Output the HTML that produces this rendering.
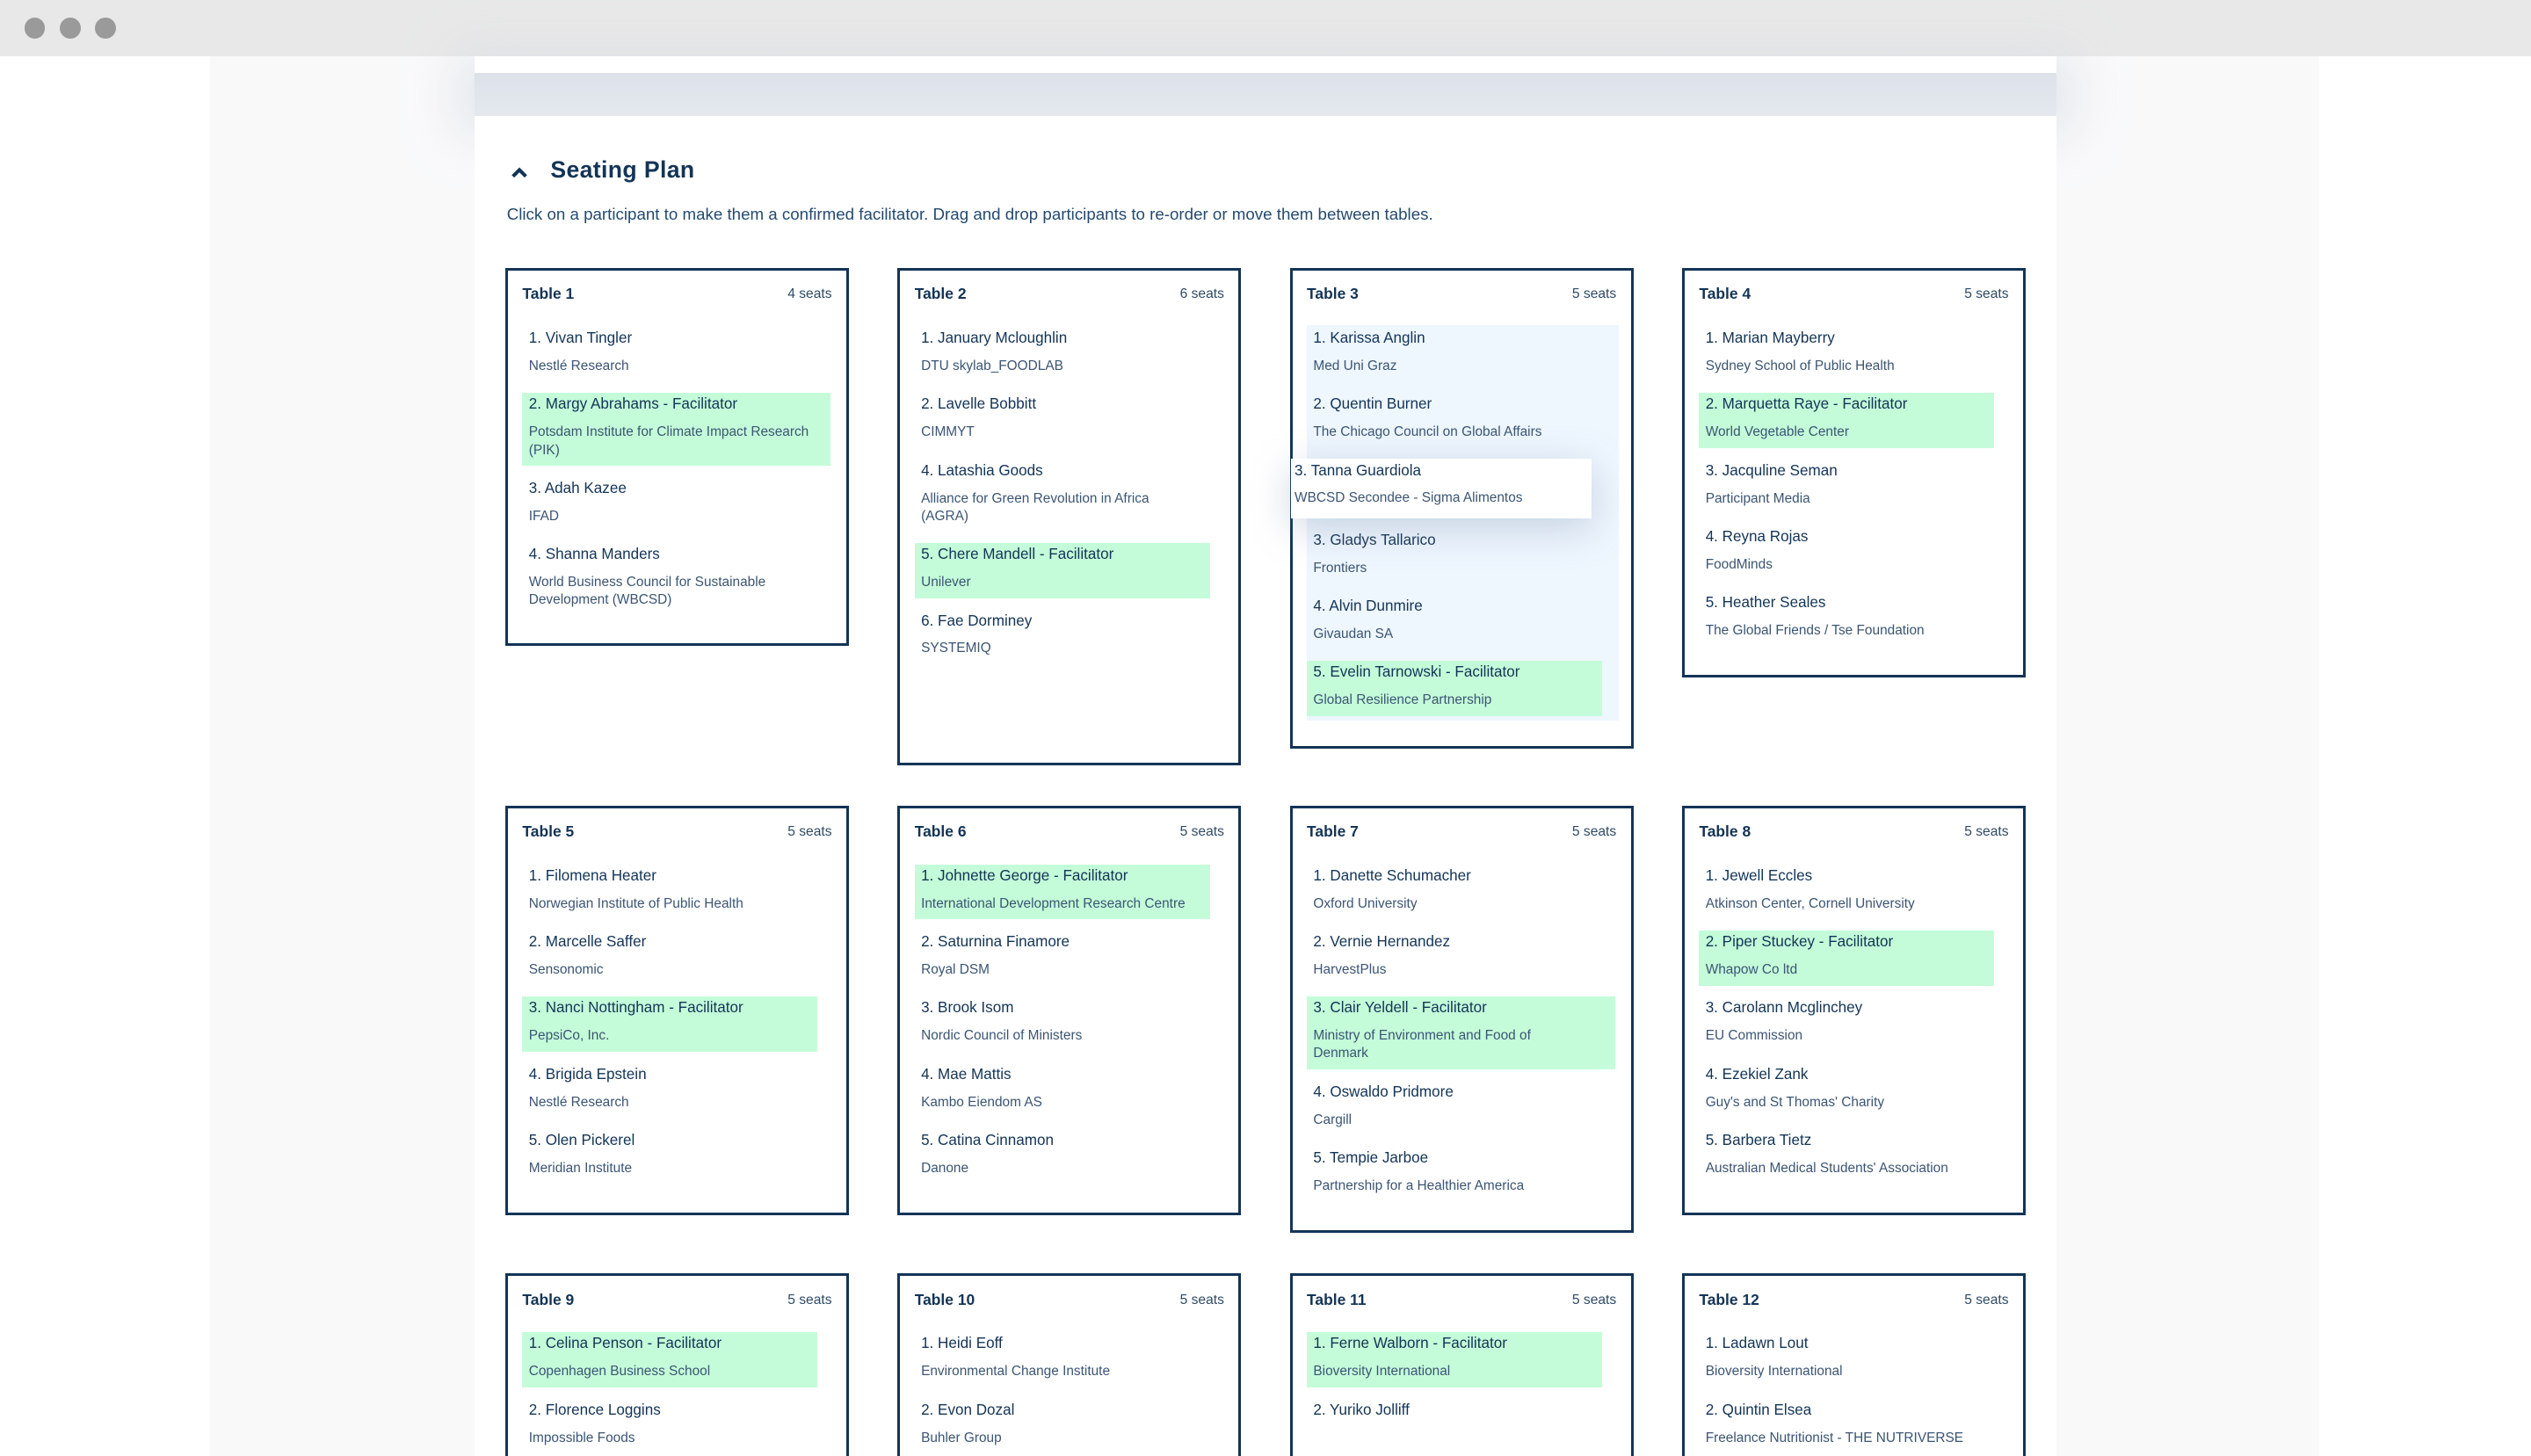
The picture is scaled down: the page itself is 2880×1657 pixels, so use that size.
<!DOCTYPE html>
<html><head><meta charset="utf-8">
<style>
html,body{margin:0;padding:0;background:#fff;overflow:hidden}
#w{zoom:1.8367;width:1568px;height:902px;position:relative;overflow:hidden;background:#fff;font-family:"Liberation Sans",sans-serif;color:#133456}
.bar{position:absolute;left:0;top:0;width:1568px;height:35px;background:#e8e8e8}
.dot{position:absolute;top:11px;width:13px;height:13px;border-radius:50%;background:#9a9a9a}
.panel{position:absolute;left:130px;top:35px;width:1307px;height:867px;background:#f9f9fa}
.topcard{position:absolute;left:294px;top:35px;width:980px;height:10px;background:#fff}
.gap{position:absolute;left:294px;top:45px;width:980px;height:27px;background:linear-gradient(#dde2ea,#e4e8ee);box-shadow:0 0 30px 10px rgba(210,216,226,.6)}
.main{position:absolute;left:294px;top:72px;width:980px;height:840px;background:#fff}
.title{position:absolute;left:341px;top:97px;font-size:14.5px;font-weight:bold;letter-spacing:.2px}
.chev{position:absolute;left:316px;top:101px}
.desc{position:absolute;left:314px;top:127px;font-size:10.2px;color:#244a70}
.t{position:absolute;width:213px;border:2px solid #133456;background:#fff;box-sizing:border-box}
.hd{position:absolute;left:9px;right:9px;top:9px;font-size:9.5px}
.hd b{font-weight:bold}
.hd span{float:right;font-size:8.5px;color:#2e4a66;margin-top:1px}
.list{position:absolute;left:9px;top:35px;width:192px}
.e{display:block;width:fit-content;min-width:176px;max-width:184px;padding:0 3px 4px 4px;margin-bottom:7px;box-sizing:content-box}
.n{font-size:9.3px;line-height:14px;white-space:nowrap}
.o{font-size:8.4px;line-height:11px;margin-top:5px;color:#3b5573}
.f{background:#c4fcd9}
.blue{background:#eef6fe}
.drag{background:#fff;box-shadow:0 6px 24px rgba(120,140,170,.35)}
</style></head><body><div id="w">
<div class="bar"></div>
<div class="dot" style="left:15px"></div><div class="dot" style="left:37px"></div><div class="dot" style="left:59px"></div>
<div class="panel"></div>
<div class="gap"></div>
<div class="topcard"></div>
<div class="main"></div>
<svg class="chev" width="12" height="10" viewBox="0 0 12 10"><path d="M2 8 L6 4 L10 8" fill="none" stroke="#133456" stroke-width="2.2"/></svg>
<div class="title">Seating Plan</div>
<div class="desc">Click on a participant to make them a confirmed facilitator. Drag and drop participants to re-order or move them between tables.</div>

<div class="t" style="left:313px;top:166px;height:234px">
<div class="hd"><b>Table 1</b><span>4 seats</span></div>
<div class="list">
<div class="e"><div class="n">1. Vivan Tingler</div><div class="o">Nestlé Research</div></div>
<div class="e f" style="min-width:184px"><div class="n">2. Margy Abrahams - Facilitator</div><div class="o">Potsdam Institute for Climate Impact Research (PIK)</div></div>
<div class="e"><div class="n">3. Adah Kazee</div><div class="o">IFAD</div></div>
<div class="e"><div class="n">4. Shanna Manders</div><div class="o">World Business Council for Sustainable Development (WBCSD)</div></div>
</div></div>

<div class="t" style="left:556px;top:166px;height:308px">
<div class="hd"><b>Table 2</b><span>6 seats</span></div>
<div class="list">
<div class="e"><div class="n">1. January Mcloughlin</div><div class="o">DTU skylab_FOODLAB</div></div>
<div class="e"><div class="n">2. Lavelle Bobbitt</div><div class="o">CIMMYT</div></div>
<div class="e"><div class="n">4. Latashia Goods</div><div class="o" style="max-width:165px">Alliance for Green Revolution in Africa (AGRA)</div></div>
<div class="e f"><div class="n">5. Chere Mandell - Facilitator</div><div class="o">Unilever</div></div>
<div class="e"><div class="n">6. Fae Dorminey</div><div class="o">SYSTEMIQ</div></div>
</div></div>

<div class="t" style="left:799px;top:166px;height:298px">
<div class="hd"><b>Table 3</b><span>5 seats</span></div>
<div class="list blue" style="top:34px;height:245px;width:193px">
<div style="height:1px"></div>
<div class="e"><div class="n">1. Karissa Anglin</div><div class="o">Med Uni Graz</div></div>
<div class="e"><div class="n">2. Quentin Burner</div><div class="o">The Chicago Council on Global Affairs</div></div>
<div style="height:43px"></div>
<div class="e"><div class="n">3. Gladys Tallarico</div><div class="o">Frontiers</div></div>
<div class="e"><div class="n">4. Alvin Dunmire</div><div class="o">Givaudan SA</div></div>
<div class="e f"><div class="n">5. Evelin Tarnowski - Facilitator</div><div class="o">Global Resilience Partnership</div></div>
</div></div>
<div class="drag" style="position:absolute;left:800px;top:284px;width:186px;height:37px">
<div class="n" style="position:absolute;left:2px;top:1px">3. Tanna Guardiola</div>
<div class="o" style="position:absolute;left:2px;top:19px;margin:0">WBCSD Secondee - Sigma Alimentos</div></div>

<div class="t" style="left:1042px;top:166px;height:254px">
<div class="hd"><b>Table 4</b><span>5 seats</span></div>
<div class="list">
<div class="e"><div class="n">1. Marian Mayberry</div><div class="o">Sydney School of Public Health</div></div>
<div class="e f"><div class="n">2. Marquetta Raye - Facilitator</div><div class="o">World Vegetable Center</div></div>
<div class="e"><div class="n">3. Jacquline Seman</div><div class="o">Participant Media</div></div>
<div class="e"><div class="n">4. Reyna Rojas</div><div class="o">FoodMinds</div></div>
<div class="e"><div class="n">5. Heather Seales</div><div class="o">The Global Friends / Tse Foundation</div></div>
</div></div>

<div class="t" style="left:313px;top:499px;height:254px">
<div class="hd"><b>Table 5</b><span>5 seats</span></div>
<div class="list">
<div class="e"><div class="n">1. Filomena Heater</div><div class="o">Norwegian Institute of Public Health</div></div>
<div class="e"><div class="n">2. Marcelle Saffer</div><div class="o">Sensonomic</div></div>
<div class="e f"><div class="n">3. Nanci Nottingham - Facilitator</div><div class="o">PepsiCo, Inc.</div></div>
<div class="e"><div class="n">4. Brigida Epstein</div><div class="o">Nestlé Research</div></div>
<div class="e"><div class="n">5. Olen Pickerel</div><div class="o">Meridian Institute</div></div>
</div></div>

<div class="t" style="left:556px;top:499px;height:254px">
<div class="hd"><b>Table 6</b><span>5 seats</span></div>
<div class="list">
<div class="e f"><div class="n">1. Johnette George - Facilitator</div><div class="o" style="white-space:nowrap">International Development Research Centre</div></div>
<div class="e"><div class="n">2. Saturnina Finamore</div><div class="o">Royal DSM</div></div>
<div class="e"><div class="n">3. Brook Isom</div><div class="o">Nordic Council of Ministers</div></div>
<div class="e"><div class="n">4. Mae Mattis</div><div class="o">Kambo Eiendom AS</div></div>
<div class="e"><div class="n">5. Catina Cinnamon</div><div class="o">Danone</div></div>
</div></div>

<div class="t" style="left:799px;top:499px;height:265px">
<div class="hd"><b>Table 7</b><span>5 seats</span></div>
<div class="list">
<div class="e"><div class="n">1. Danette Schumacher</div><div class="o">Oxford University</div></div>
<div class="e"><div class="n">2. Vernie Hernandez</div><div class="o">HarvestPlus</div></div>
<div class="e f" style="min-width:184px"><div class="n">3. Clair Yeldell - Facilitator</div><div class="o" style="max-width:170px">Ministry of Environment and Food of Denmark</div></div>
<div class="e"><div class="n">4. Oswaldo Pridmore</div><div class="o">Cargill</div></div>
<div class="e"><div class="n">5. Tempie Jarboe</div><div class="o">Partnership for a Healthier America</div></div>
</div></div>

<div class="t" style="left:1042px;top:499px;height:254px">
<div class="hd"><b>Table 8</b><span>5 seats</span></div>
<div class="list">
<div class="e"><div class="n">1. Jewell Eccles</div><div class="o">Atkinson Center, Cornell University</div></div>
<div class="e f"><div class="n">2. Piper Stuckey - Facilitator</div><div class="o">Whapow Co ltd</div></div>
<div class="e"><div class="n">3. Carolann Mcglinchey</div><div class="o">EU Commission</div></div>
<div class="e"><div class="n">4. Ezekiel Zank</div><div class="o">Guy's and St Thomas' Charity</div></div>
<div class="e"><div class="n">5. Barbera Tietz</div><div class="o" style="white-space:nowrap">Australian Medical Students' Association</div></div>
</div></div>

<div class="t" style="left:313px;top:789px;height:200px">
<div class="hd"><b>Table 9</b><span>5 seats</span></div>
<div class="list">
<div class="e f"><div class="n">1. Celina Penson - Facilitator</div><div class="o">Copenhagen Business School</div></div>
<div class="e"><div class="n">2. Florence Loggins</div><div class="o">Impossible Foods</div></div>
</div></div>
<div class="t" style="left:556px;top:789px;height:200px">
<div class="hd"><b>Table 10</b><span>5 seats</span></div>
<div class="list">
<div class="e"><div class="n">1. Heidi Eoff</div><div class="o">Environmental Change Institute</div></div>
<div class="e"><div class="n">2. Evon Dozal</div><div class="o">Buhler Group</div></div>
</div></div>
<div class="t" style="left:799px;top:789px;height:200px">
<div class="hd"><b>Table 11</b><span>5 seats</span></div>
<div class="list">
<div class="e f"><div class="n">1. Ferne Walborn - Facilitator</div><div class="o">Bioversity International</div></div>
<div class="e" style="margin-bottom:18px"><div class="n">2. Yuriko Jolliff</div></div>
<div class="e"><div class="n">3. Uwe Hall</div><div class="o">&nbsp;</div></div>
</div></div>
<div class="t" style="left:1042px;top:789px;height:200px">
<div class="hd"><b>Table 12</b><span>5 seats</span></div>
<div class="list">
<div class="e"><div class="n">1. Ladawn Lout</div><div class="o">Bioversity International</div></div>
<div class="e"><div class="n">2. Quintin Elsea</div><div class="o" style="white-space:nowrap">Freelance Nutritionist - THE NUTRIVERSE</div></div>
</div></div>
</div></body></html>
